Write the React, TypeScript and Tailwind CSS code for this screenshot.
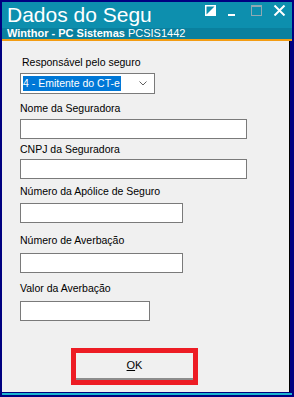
const font = { fontFamily: '"Liberation Sans", Arial, sans-serif' };

const Label = ({ text, className = '' }: { text: string; className?: string }) => (
  <div className={`h-[13px] text-[10.5px] leading-[13px] text-black whitespace-nowrap ${className}`}>{text}</div>
);

const Field = ({ width, className = '' }: { width: string; className?: string }) => (
  <div className={`h-[20px] border border-[#7a7a7a] bg-white ${width} ${className}`} />
);

const App = () => {
  return (
    <div className="w-[294px] h-[397px] bg-[#000080] pt-[2px] pl-[2px] pr-[4px] flex flex-col overflow-hidden" style={font}>
      {/* title bar */}
      <div className="bg-[#0d8fae] -mr-[2px]">
        <div className="h-[26px] flex items-start">
          <div className="pl-[5px] text-[21px] leading-[26px] text-white whitespace-nowrap">Dados do Segu</div>
          <div className="ml-auto flex items-start pt-[3px] pr-[6px]">
            <svg width="11" height="11" viewBox="0 0 11 11">
              <rect x="0.75" y="0.75" width="9.5" height="9.5" fill="none" stroke="#fff" strokeWidth="1.5" />
              <polygon points="0,11 11,0 11,11" fill="#fff" />
            </svg>
            <svg width="7" height="11" viewBox="0 0 7 11" className="ml-[12px]">
              <rect x="0" y="9" width="7" height="2" fill="#fff" />
            </svg>
            <svg width="11" height="11" viewBox="0 0 11 11" className="ml-[16px]">
              <rect x="0.5" y="0.5" width="10" height="10" fill="none" stroke="#8fa9b3" strokeWidth="1" />
              <rect x="0" y="0" width="11" height="2" fill="#8fa9b3" />
            </svg>
            <svg width="13" height="11" viewBox="0 0 13 11" className="ml-[11px]">
              <path d="M1.5 0.5 L11.5 10.5 M11.5 0.5 L1.5 10.5" stroke="#fff" strokeWidth="2" />
            </svg>
          </div>
        </div>
        <div className="h-[11px] bg-[#0a809e] pl-[5px] text-[11px] leading-[11px] text-white whitespace-nowrap">
          <span className="font-bold">Winthor - PC Sistemas</span> PCSIS1442
        </div>
        <div className="h-[2px] bg-[#f39c12]" />
      </div>

      {/* body */}
      <div className="h-[351px] bg-[#f0f0f0] border-r border-black flex flex-col pl-[18px] pt-[15px]">
        <Label text="Responsável pelo seguro" className="ml-[2px]" />
        <div className="mt-[4px] w-[135px] h-[21px] border border-[#7a7a7a] bg-white flex items-center pl-[2px] pr-[7px]">
          <div className="h-[15px] bg-[#0078d7] pr-[1px] text-white text-[10.5px] leading-[15px] whitespace-nowrap">4 - Emitente do CT-e</div>
          <svg width="8" height="5" viewBox="0 0 8 5" className="ml-auto">
            <path d="M0.5 0.5 L4 4 L7.5 0.5" fill="none" stroke="#606060" strokeWidth="1" />
          </svg>
        </div>

        <Label text="Nome da Seguradora" className="mt-[8px]" />
        <Field width="w-[227px]" className="mt-[4px]" />

        <Label text="CNPJ da Seguradora" className="mt-[4px]" />
        <Field width="w-[227px]" className="mt-[3px]" />

        <Label text="Número da Apólice de Seguro" className="mt-[6px]" />
        <Field width="w-[163px]" className="mt-[5px]" />

        <Label text="Número de Averbação" className="mt-[11px]" />
        <Field width="w-[163px]" className="mt-[6px]" />

        <Label text="Valor da Averbação" className="mt-[9px]" />
        <Field width="w-[130px]" className="mt-[6px]" />

        <div className="mt-[27px] ml-[51px] w-[127px] h-[37px] border-[5px] border-[#ed1c24]">
          <div className="h-full bg-[#f0f0f0] border-b-2 border-[#8c8c8c] flex items-center justify-center text-[11px] text-black">
            <span><span className="underline">O</span>K</span>
          </div>
        </div>
      </div>

      {/* bottom frame */}
      <div className="h-[1px]" />
      <div className="h-[2px] bg-[#19b4d0] -mr-[2px]" />
    </div>
  );
};

export default App;
